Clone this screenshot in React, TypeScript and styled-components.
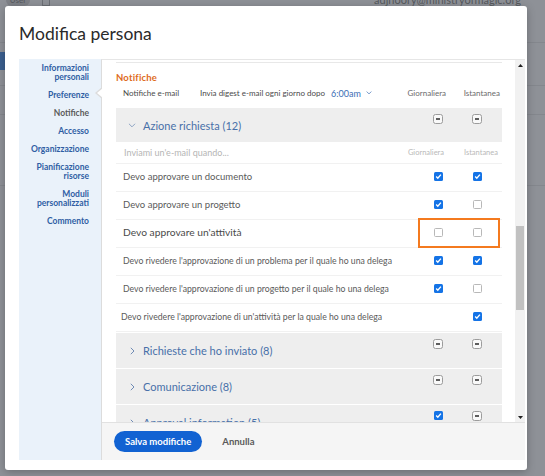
import React from 'react';
import styled, { createGlobalStyle } from 'styled-components';

const Global = createGlobalStyle`
  html, body { margin: 0; padding: 0; }
  body {
    width: 545px;
    height: 476px;
    overflow: hidden;
    background: #8e9197;
    font-family: Lato, "Liberation Sans", sans-serif;
  }
`;

/* ---------- dimmed app behind the dialog ---------- */
const Screen = styled.div`
  position: relative;
  width: 545px;
  height: 476px;
  overflow: hidden;
  background: #8e9197;
`;

const BackApp = styled.div`
  display: flex;
  flex-direction: column;
  width: 545px;
  height: 476px;
`;

const BackTop = styled.div`
  display: flex;
  align-items: center;
  height: 12px;
  margin-top: -6px;
  padding: 0 24px 0 6px;
  gap: 12px;
`;

const UserPill = styled.div`
  width: 24px;
  height: 12px;
  border-radius: 6px;
  background: #7e8187;
  color: #55585d;
  font-size: 8px;
  line-height: 12px;
  text-align: center;
`;

const BackIcon = styled.div`
  width: 6px;
  height: 10px;
  border: 1px solid #6c6f75;
  border-top: none;
`;

const Email = styled.div`
  margin-left: auto;
  font-size: 11px;
  color: #55585c;
  line-height: 12px;
`;

const BackRule = styled.div<{ $top: number }>`
  margin-top: ${(p) => p.$top}px;
  height: 1px;
  background: #84878d;
`;

const BlueBand = styled.div`
  margin-top: 9px;
  height: 18px;
  width: 60px;
  background: #3b5f8f;
`;

/* ---------- dialog ---------- */
const Modal = styled.div`
  position: absolute;
  left: 5px;
  top: 6px;
  width: 522px;
  height: 464px;
  background: #ffffff;
  border-radius: 3px;
  box-shadow: 0 2px 8px rgba(0, 0, 0, 0.25);
  display: flex;
  flex-direction: column;
`;

const Header = styled.div`
  height: 53px;
  padding: 2px 0 0 14px;
  box-sizing: border-box;
  display: flex;
  align-items: center;
`;

const Title = styled.h2`
  margin: 0;
  font-family: Lato, "Liberation Sans", sans-serif;
  font-weight: 400;
  font-size: 17.5px;
  color: #2a2a2a;
`;

const Body = styled.div`
  flex: 1;
  display: flex;
  padding: 0 2px 10px 14px;
  min-height: 0;
`;

const Sidebar = styled.nav`
  width: 82px;
  flex-shrink: 0;
  background: #eaf2fa;
  display: flex;
  flex-direction: column;
`;

const NavItem = styled.div<{ $active?: boolean }>`
  text-align: right;
  padding: 4.5px 12px 4.5px 4px;
  font-size: 8.5px;
  line-height: 9px;
  font-weight: 700;
  color: ${(p) => (p.$active ? '#5a5a5a' : '#2f5ea4')};
`;

const Panel = styled.div`
  flex: 1;
  display: flex;
  flex-direction: column;
  border-left: 1px solid #dcdcdc;
  border-top: 1px solid #e6e6e6;
  position: relative;
  min-width: 0;

  &::before,
  &::after {
    content: '';
    position: absolute;
    top: 27px;
    width: 0;
    height: 0;
    border-style: solid;
  }
  &::before {
    left: -7px;
    border-width: 6px 7px 6px 0;
    border-color: transparent #dcdcdc transparent transparent;
  }
  &::after {
    left: -5px;
    top: 28px;
    border-width: 5px 6px 5px 0;
    border-color: transparent #ffffff transparent transparent;
  }
`;

const ScrollRow = styled.div`
  flex: 1;
  display: flex;
  overflow: hidden;
  min-height: 0;
`;

const ScrollContent = styled.div`
  flex: 1;
  padding: 2px 13px 0 14px;
  overflow: hidden;
  min-width: 0;
`;

const TopRule = styled.div`
  height: 1px;
  background: #e8e8e8;
`;

const SectionTitle = styled.div`
  margin-top: 9px;
  font-size: 9.5px;
  line-height: 12px;
  font-weight: 700;
  color: #de6b1c;
  letter-spacing: 0.2px;
`;

const EmailRow = styled.div`
  margin-top: 2px;
  height: 14px;
  display: flex;
  align-items: center;
  font-size: 8px;
  color: #4a4a4a;
`;

const EmailLabel = styled.div`
  width: 77px;
  padding-left: 7px;
`;

const Digest = styled.div`
  white-space: nowrap;
`;

const TimeSelect = styled.div`
  display: flex;
  align-items: center;
  gap: 5px;
  margin-left: 6px;
  font-size: 9px;
  color: #3a6db4;
`;

const ColHead = styled.div<{ $light?: boolean }>`
  width: 54px;
  flex-shrink: 0;
  text-align: right;
  box-sizing: border-box;
  padding-right: ${(p) => (p.$light ? 4 : 2)}px;
  font-size: ${(p) => (p.$light ? 7.5 : 8)}px;
  color: ${(p) => (p.$light ? '#b9b9b9' : '#6b6b6b')};
  white-space: nowrap;
`;

const Spacer = styled.div`
  flex: 1;
`;

const Groups = styled.div`
  margin-top: 8px;
  display: flex;
  flex-direction: column;
  gap: 1px;
`;

const GroupHeader = styled.div<{ $h?: number }>`
  height: ${(p) => p.$h ?? 35}px;
  background: #eeeeee;
  display: flex;
  align-items: flex-start;
  padding-right: 8px;
`;

const GroupTitle = styled.div`
  flex: 1;
  align-self: center;
  display: flex;
  align-items: center;
  padding-left: 12px;
  gap: 7px;
  font-size: 11px;
  color: #4870a9;
  white-space: nowrap;
  overflow: hidden;
`;

const ChevronBox = styled.span`
  width: 8px;
  display: flex;
  justify-content: center;
`;

const Cell = styled.div<{ $w: number; $top?: boolean }>`
  width: ${(p) => p.$w}px;
  flex-shrink: 0;
  display: flex;
  justify-content: center;
  align-self: ${(p) => (p.$top ? 'flex-start' : 'center')};
  padding-top: ${(p) => (p.$top ? 6 : 0)}px;
`;

const GroupBody = styled.div`
  display: flex;
  flex-direction: column;
  background: #ffffff;
`;

const SubHeader = styled.div`
  height: 22px;
  box-sizing: border-box;
  display: flex;
  align-items: center;
  border-bottom: 1px solid #f1f1f1;
  font-size: 9px;
  color: #b5b5b5;
`;

const SubLabel = styled.div`
  flex: 1;
  padding-left: 8px;
`;

const ItemRow = styled.div`
  position: relative;
  height: 28px;
  box-sizing: border-box;
  display: flex;
  align-items: center;
  border-bottom: 1px solid #f1f1f1;
  padding: 0 8px 3px 0;
`;

const ItemLabel = styled.div<{ $size: number; $indent?: number }>`
  flex: 1;
  padding-left: ${(p) => p.$indent ?? 7}px;
  font-size: ${(p) => p.$size}px;
  color: ${(p) => (p.$size > 10 ? '#4a4a4a' : '#5a5a5a')};
  white-space: nowrap;
  overflow: hidden;
`;

const Highlight = styled.div`
  position: absolute;
  right: 2px;
  top: -2px;
  width: 82px;
  height: 30px;
  box-sizing: border-box;
  border: 2.5px solid #f47a1f;
  pointer-events: none;
`;

const Box = styled.span<{ $state: 'on' | 'off' | 'mixed' }>`
  width: ${(p) => (p.$state === 'mixed' ? 10 : 9)}px;
  height: ${(p) => (p.$state === 'mixed' ? 10 : 9)}px;
  box-sizing: border-box;
  border-radius: ${(p) => (p.$state === 'mixed' ? 2.5 : 1.5)}px;
  display: flex;
  align-items: center;
  justify-content: center;
  background: ${(p) => (p.$state === 'on' ? '#1473e6' : p.$state === 'mixed' ? '#f9f9f9' : '#ffffff')};
  border: ${(p) =>
    p.$state === 'on' ? 'none' : p.$state === 'mixed' ? '1px solid #9c9c9c' : '1px solid #b8b8b8'};
`;

const Dash = styled.span`
  width: 4px;
  height: 1.2px;
  background: #5d5d5d;
`;

const ScrollBar = styled.div`
  width: 10px;
  flex-shrink: 0;
  background: #f1f1f1;
  display: flex;
  flex-direction: column;
`;

const ScrollArrow = styled.div`
  height: 10px;
  display: flex;
  align-items: center;
  justify-content: center;
`;

const Track = styled.div`
  flex: 1;
  display: flex;
  flex-direction: column;
  align-items: center;
`;

const Thumb = styled.div`
  width: 8px;
  background: #c1c1c1;
`;

const Footer = styled.div`
  height: 38px;
  flex-shrink: 0;
  box-sizing: border-box;
  background: #f5f5f5;
  border-top: 1px solid #e1e1e1;
  display: flex;
  align-items: center;
  padding-left: 12px;
  gap: 20px;
`;

const PrimaryButton = styled.button`
  height: 21px;
  padding: 0 11px;
  border: none;
  border-radius: 11px;
  background: #1162d2;
  color: #ffffff;
  font-family: Lato, "Liberation Sans", sans-serif;
  font-weight: 700;
  font-size: 9.5px;
`;

const TextButton = styled.button`
  border: none;
  background: none;
  padding: 0;
  color: #5a5a5a;
  font-family: Lato, "Liberation Sans", sans-serif;
  font-weight: 700;
  font-size: 9.5px;
`;

type State = 'on' | 'off' | 'mixed' | 'none';

const Check = ({ s }: { s: State }) => {
  if (s === 'none') return null;
  return (
    <Box $state={s}>
      {s === 'on' && (
        <svg width="7" height="7" viewBox="0 0 7 7">
          <polyline points="1.2,3.6 2.8,5.2 5.9,1.6" fill="none" stroke="#fff" strokeWidth="1.4" />
        </svg>
      )}
      {s === 'mixed' && <Dash />}
    </Box>
  );
};

const ChevronDown = ({ color, w = 8 }: { color: string; w?: number }) => (
  <svg width={w} height={w * 0.6} viewBox="0 0 8 5">
    <polyline points="0.8,0.8 4,4 7.2,0.8" fill="none" stroke={color} strokeWidth="1" />
  </svg>
);

const ChevronRight = () => (
  <svg width="5" height="8" viewBox="0 0 5 8">
    <polyline points="0.8,0.8 4,4 0.8,7.2" fill="none" stroke="#6f8bb5" strokeWidth="1" />
  </svg>
);

const items: { label: string; size: number; a: State; b: State; indent?: number; hl?: boolean }[] = [
  { label: 'Devo approvare un documento', size: 9.5, a: 'on', b: 'on' },
  { label: 'Devo approvare un progetto', size: 9.5, a: 'on', b: 'off' },
  { label: "Devo approvare un'attività", size: 10.25, a: 'off', b: 'off', hl: true },
  { label: "Devo rivedere l'approvazione di un problema per il quale ho una delega", size: 8.7, a: 'on', b: 'on' },
  { label: "Devo rivedere l'approvazione di un progetto per il quale ho una delega", size: 8.7, a: 'on', b: 'off' },
  { label: "Devo rivedere l'approvazione di un'attività per la quale ho una delega", size: 8.7, a: 'none', b: 'on', indent: 5 },
];

const collapsed: { title: string; a: State; b: State }[] = [
  { title: 'Richieste che ho inviato (8)', a: 'mixed', b: 'mixed' },
  { title: 'Comunicazione (8)', a: 'mixed', b: 'mixed' },
  { title: 'Approval information (5)', a: 'on', b: 'mixed' },
];

const nav: { label: string[]; active?: boolean }[] = [
  { label: ['Informazioni', 'personali'] },
  { label: ['Preferenze'] },
  { label: ['Notifiche'], active: true },
  { label: ['Accesso'] },
  { label: ['Organizzazione'] },
  { label: ['Pianificazione', 'risorse'] },
  { label: ['Moduli', 'personalizzati'] },
  { label: ['Commento'] },
];

const thumbTop = 156;
const thumbHeight = 84;

export default function App() {
  return (
    <Screen>
      <Global />
      <BackApp>
        <BackTop>
          <UserPill>User</UserPill>
          <BackIcon />
          <Email>adjnoory@ministryofmagic.org</Email>
        </BackTop>
        <BackRule $top={36} />
        <BlueBand />
        <BackRule $top={15} />
        <BackRule $top={28} />
        <BackRule $top={70} />
      </BackApp>

      <Modal>
        <Header>
          <Title>Modifica persona</Title>
        </Header>
        <Body>
          <Sidebar>
            {nav.map((n) => (
              <NavItem key={n.label.join(' ')} $active={n.active}>
                {n.label.map((l, i) => (
                  <React.Fragment key={l}>
                    {i > 0 && <br />}
                    {l}
                  </React.Fragment>
                ))}
              </NavItem>
            ))}
          </Sidebar>
          <Panel>
            <ScrollRow>
              <ScrollContent>
                <TopRule />
                <SectionTitle>Notifiche</SectionTitle>
                <EmailRow>
                  <EmailLabel>Notifiche e-mail</EmailLabel>
                  <Digest>Invia digest e-mail ogni giorno dopo</Digest>
                  <TimeSelect>
                    6:00am
                    <ChevronDown color="#3a6db4" w={6} />
                  </TimeSelect>
                  <Spacer />
                  <ColHead>Giornaliera</ColHead>
                  <ColHead>Istantanea</ColHead>
                </EmailRow>
                <Groups>
                  <div>
                    <GroupHeader $h={34}>
                      <GroupTitle>
                        <ChevronBox>
                          <ChevronDown color="#8aa1c2" />
                        </ChevronBox>
                        Azione richiesta (12)
                      </GroupTitle>
                      <Cell $w={44} $top>
                        <Check s="mixed" />
                      </Cell>
                      <Cell $w={34} $top>
                        <Check s="mixed" />
                      </Cell>
                    </GroupHeader>
                    <GroupBody>
                      <SubHeader>
                        <SubLabel>Inviami un'e-mail quando...</SubLabel>
                        <ColHead $light>Giornaliera</ColHead>
                        <ColHead $light>Istantanea</ColHead>
                      </SubHeader>
                      {items.map((it) => (
                        <ItemRow key={it.label}>
                          <ItemLabel $size={it.size} $indent={it.indent}>
                            {it.label}
                          </ItemLabel>
                          <Cell $w={44}>
                            <Check s={it.a} />
                          </Cell>
                          <Cell $w={34}>
                            <Check s={it.b} />
                          </Cell>
                          {it.hl && <Highlight />}
                        </ItemRow>
                      ))}
                    </GroupBody>
                  </div>
                  {collapsed.map((g) => (
                    <GroupHeader key={g.title}>
                      <GroupTitle>
                        <ChevronBox>
                          <ChevronRight />
                        </ChevronBox>
                        {g.title}
                      </GroupTitle>
                      <Cell $w={44} $top>
                        <Check s={g.a} />
                      </Cell>
                      <Cell $w={34} $top>
                        <Check s={g.b} />
                      </Cell>
                    </GroupHeader>
                  ))}
                </Groups>
              </ScrollContent>
              <ScrollBar>
                <ScrollArrow>
                  <svg width="5" height="3" viewBox="0 0 5 3">
                    <polygon points="0,3 2.5,0 5,3" fill="#222" />
                  </svg>
                </ScrollArrow>
                <Track>
                  <Thumb style={{ marginTop: thumbTop, height: thumbHeight }} />
                </Track>
                <ScrollArrow>
                  <svg width="5" height="3" viewBox="0 0 5 3">
                    <polygon points="0,0 5,0 2.5,3" fill="#222" />
                  </svg>
                </ScrollArrow>
              </ScrollBar>
            </ScrollRow>
            <Footer>
              <PrimaryButton>Salva modifiche</PrimaryButton>
              <TextButton>Annulla</TextButton>
            </Footer>
          </Panel>
        </Body>
      </Modal>
    </Screen>
  );
}
